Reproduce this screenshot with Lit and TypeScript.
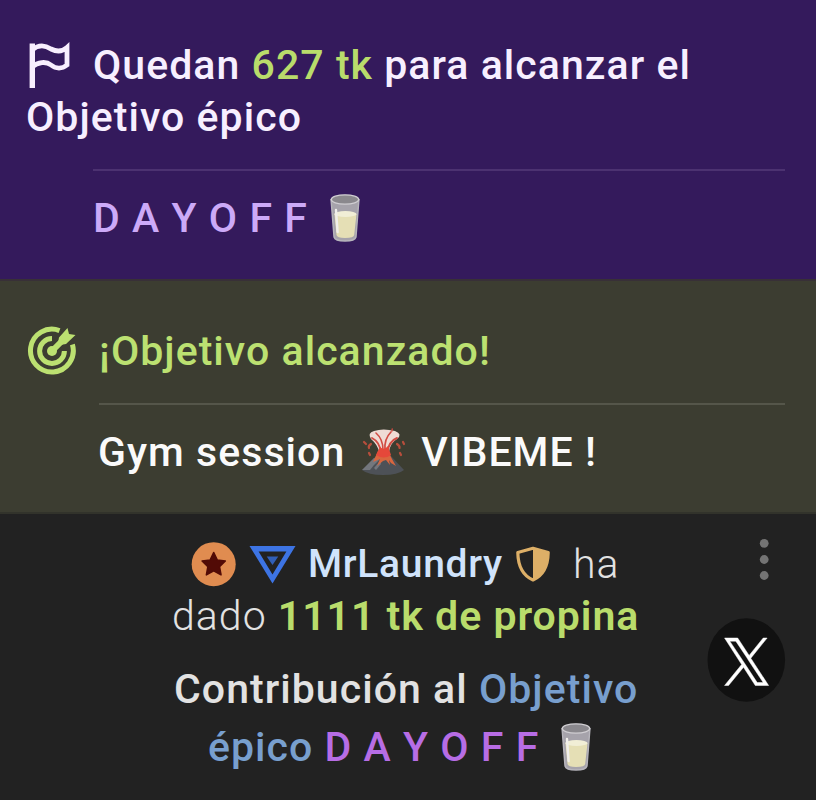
import { LitElement, html, css, svg } from "lit";
import { customElement } from "lit/decorators.js";

const glass = () => html`<svg class="glass" viewBox="0 0 30 48">
  <path d="M1 5 L4 43 Q5 47 15 47 Q25 47 26 43 L29 5Z" fill="#a6a3ab" />
  <path d="M4.5 20 L6.5 41 Q7 44 15 44 Q24 44 24.2 41 L26.5 20Z" fill="#e5dfb5" />
  <ellipse cx="15.4" cy="20" rx="11.2" ry="3" fill="#f1eed6" />
  <path d="M1 5 L4 43 Q5 47 15 47 Q25 47 26 43 L29 5" fill="none" stroke="#b7b5bc" stroke-width="1.4" />
  <path d="M6 16 L7.6 38" stroke="#f1efeb" stroke-width="2.4" stroke-linecap="round" />
  <ellipse cx="15" cy="5.5" rx="13.7" ry="4.7" fill="#8a888d" stroke="#d0ced2" stroke-width="1.3" />
</svg>`;

const volcano = () => html`<svg class="volcano" viewBox="0 0 46 48">
  <path d="M1 42 L15 28 Q22 24 29 27 L43 42 Q37 47 22 47 Q7 47 1 42Z" fill="#4d5157" />
  <path d="M1 42 L13 30 L19 31 L13 37 L9 42Z" fill="#74777d" />
  <path d="M13 40 L19 33 L20 36 L15 42Z" fill="#74777d" />
  <path d="M17 23 H27 L31 31 L35 38 L30 35 L28 32 L29 37 L25 32 L22 33 L16 38 L19 31 L12 34Z" fill="#d9663f" />
  <path d="M18 24 Q17 17 10 11 Q6 5 13 3 Q22 0 34 3 Q42 6 36 11 Q29 15 28 24 Q23 28 18 24Z" fill="#efdcd5" />
  <g fill="none" stroke="#d14c43" stroke-linecap="round">
    <path d="M20 25 Q19 14 11 10" stroke-width="1.9" />
    <path d="M22 22 Q22 11 15 5" stroke-width="1.6" />
    <path d="M24 22 Q23 11 30 4" stroke-width="1.7" />
    <path d="M26 25 Q28 13 36 10" stroke-width="1.9" />
    <path d="M31 3 L31.2 1" stroke-width="1.4" />
  </g>
  <path d="M19 19 Q23 23 27 18 L30 27 Q23 32 15 27Z" fill="#e5483a" />
  <g fill="none" stroke="#b84e3c" stroke-width="2.2" stroke-linecap="round">
    <path d="M3 14 L5 16" /><path d="M10 16 Q7 18 8 20" /><path d="M8 25 L9 27" />
    <path d="M36 16 Q39 18 38.5 20" /><path d="M42 14 L43 16" /><path d="M39 25 L40 27" />
  </g>
</svg>`;

@customElement("app-root")
export class AppRoot extends LitElement {
  static styles = css`
    :host {
      display: block;
      height: 800px;
      overflow: hidden;
      background: #222222;
      color: #f7efff;
      font: 500 41px/52px Roboto, "Noto Sans", sans-serif;
      letter-spacing: 1.05px;
    }
    svg { display: block; flex: none; }
    section { box-sizing: border-box; }
    .row { display: flex; align-items: center; height: 52px; white-space: pre; }
    .epic { height: 279px; padding: 39px 31px 0 26px; background: #341a5c; }
    .reached { height: 235px; padding: 44px 31px 0 27px; background: #3c3d31; border-top: 2px solid #383037; border-bottom: 2px solid #32332b; }
    .tip { position: relative; height: 286px; padding-top: 24px; color: #e2e2e2; }
    .rule { height: 2px; margin-left: 67px; background: #4c3271; }
    .epic .rule { margin-top: 26px; }
    .reached .rule { margin: 26px 0 21px 72px; background: #55564a; }
    .flag { width: 46px; height: 50px; margin-right: 21px; }
    .target { width: 50px; height: 50px; margin-right: 22px; }
    .epic .menu { margin: 21px 0 0 67px; color: #ccaaf8; }
    .glass { width: 30px; height: 48px; }
    .volcano { width: 46px; height: 48px; }
    .epic .glass { margin-left: 22px; }
    .lime { color: #b9dc6b; }
    .reached .lime { color: #bce171; }
    .session { margin-left: 71px; color: #fafafa; }
    .session .volcano { margin: 0 14px 0 16px; }
    .from { padding-left: 191px; }
    .medal { width: 46px; height: 46px; margin-right: 12px; }
    .gem { width: 48px; height: 40px; margin-right: 11px; }
    .name { color: #d0e3fb; font-size: 39px; letter-spacing: 0.7px; }
    .shield { width: 36px; height: 36px; margin: 0 22px 0 12px; }
    .light { font-weight: 300; }
    .amount { padding-left: 172px; }
    .bold { font-weight: 600; letter-spacing: 0.98px; }
    .goal { padding-left: 174px; margin-top: 21px; }
    .goal-end { padding-left: 208px; margin-top: 6px; }
    .blue { color: #789fce; }
    .violet { color: #b76de5; margin-left: 11px; }
    .goal-end .glass { margin-left: 22px; }
    .dots { position: absolute; left: 758px; top: 24px; width: 12px; height: 44px; }
    .share { position: absolute; left: 707px; top: 104px; width: 79px; height: 84px; }
  `;

  render() {
    return html`
      <section class="epic">
        <div class="row">
          <svg class="flag" viewBox="0 0 46 50">
            <path d="M6.3 48 V3.5" fill="none" stroke="#f8effe" stroke-width="5.4" />
            <path d="M6 10 C13 4 19 5 25 9 C31 12 36 12 41 7.5 V25 C36 29 30 29 25 25 C20 21 12 22 6 27"
              fill="none" stroke="#f8effe" stroke-width="4.8" />
          </svg><span>Quedan </span><span class="lime">627 tk</span><span> para alcanzar el</span>
        </div>
        <div class="row"><span>Objetivo épico</span></div>
        <div class="rule"></div>
        <div class="row menu"><span>D A Y O F F</span>${glass()}</div>
      </section>
      <section class="reached">
        <div class="row lime">
          <svg class="target" viewBox="0 0 50 50">
            <g fill="none" stroke="#bce171" stroke-width="5">
              <path d="M32.5 4.6 A21.4 21.4 0 1 0 45.4 18.5" />
              <path d="M25 12.6 A12.4 12.4 0 1 0 37.4 25" />
              <path d="M25 25 L38 12" stroke-width="6" />
            </g>
            <circle cx="25" cy="25" r="5" fill="#bce171" />
            <path d="M30.5 19.5 L32 11.5 L40.5 2 L42 8 L48.5 9 L39 18Z" fill="#bce171" />
          </svg><span>¡Objetivo alcanzado!</span>
        </div>
        <div class="rule"></div>
        <div class="row session"><span>Gym session</span>${volcano()}<span>VIBEME !</span></div>
      </section>
      <section class="tip">
        <div class="row from">
          <svg class="medal" viewBox="0 0 46 46">
            <circle cx="22.7" cy="23.2" r="22" fill="#e08c50" />
            <path d="M22.7 11.5 L26.3 19 L34.3 20 L28.5 25.7 L30 33.8 L22.7 29.9 L15.4 33.8 L16.9 25.7 L11.1 20 L19.1 19Z"
              fill="#520b06" stroke="#520b06" stroke-width="1.6" stroke-linejoin="round" />
          </svg>
          <svg class="gem" viewBox="0 0 48 40">
            <path fill-rule="evenodd" d="M0.5 2 H46.5 L23.5 39.5Z M9.6 7.5 L23.5 30.5 L37.4 7.5Z" fill="#3d74e4" />
            <path d="M17.7 12.5 H29.3 L23.5 21Z" fill="#315fb7" />
          </svg>
          <span class="name">MrLaundry</span>
          <svg class="shield" viewBox="0 0 36 36">
            <path d="M18 2.3 L33.2 6.5 C33 18 29.5 29 18 34 C6.5 29 3 18 2.8 6.5Z" fill="none" stroke="#ddaf67" stroke-width="3.2" stroke-linejoin="round" />
            <path d="M18 2 L33 6 C33 18 29 29 18 34Z" fill="#ddaf67" />
          </svg>
          <span class="light">ha</span>
        </div>
        <div class="row amount"><span class="light">dado </span><span class="lime bold">1111 tk de propina</span></div>
        <div class="row goal"><span>Contribución al </span><span class="blue">Objetivo</span></div>
        <div class="row goal-end"><span class="blue">épico</span><span class="violet">D A Y O F F</span>${glass()}</div>
        <svg class="dots" viewBox="0 0 12 44">
          ${[5.3, 21.5, 37.5].map((y) => svg`<circle cx="6.2" cy=${y} r="4.4" fill="#747474" />`)}
        </svg>
        <svg class="share" viewBox="0 0 79 84">
          <ellipse cx="39.3" cy="42" rx="38.8" ry="41.8" fill="#111111" />
          <g transform="translate(17 20) scale(1.875 1.98)">
            <path d="M14.3 10.2 L23 0 H20.9 L13.4 8.8 L7.3 0 H0.3 L9.4 13.4 L0.3 24 H2.4 L10.4 14.8 L16.7 24 H23.8Z M11.4 13.4 L10.5 12.1 L3.1 1.6 H6.3 L12.3 10.1 L13.2 11.5 L20.9 22.5 H17.7Z" fill="#fff" stroke="#fff" stroke-width="0.25" />
          </g>
        </svg>
      </section>
    `;
  }
}
